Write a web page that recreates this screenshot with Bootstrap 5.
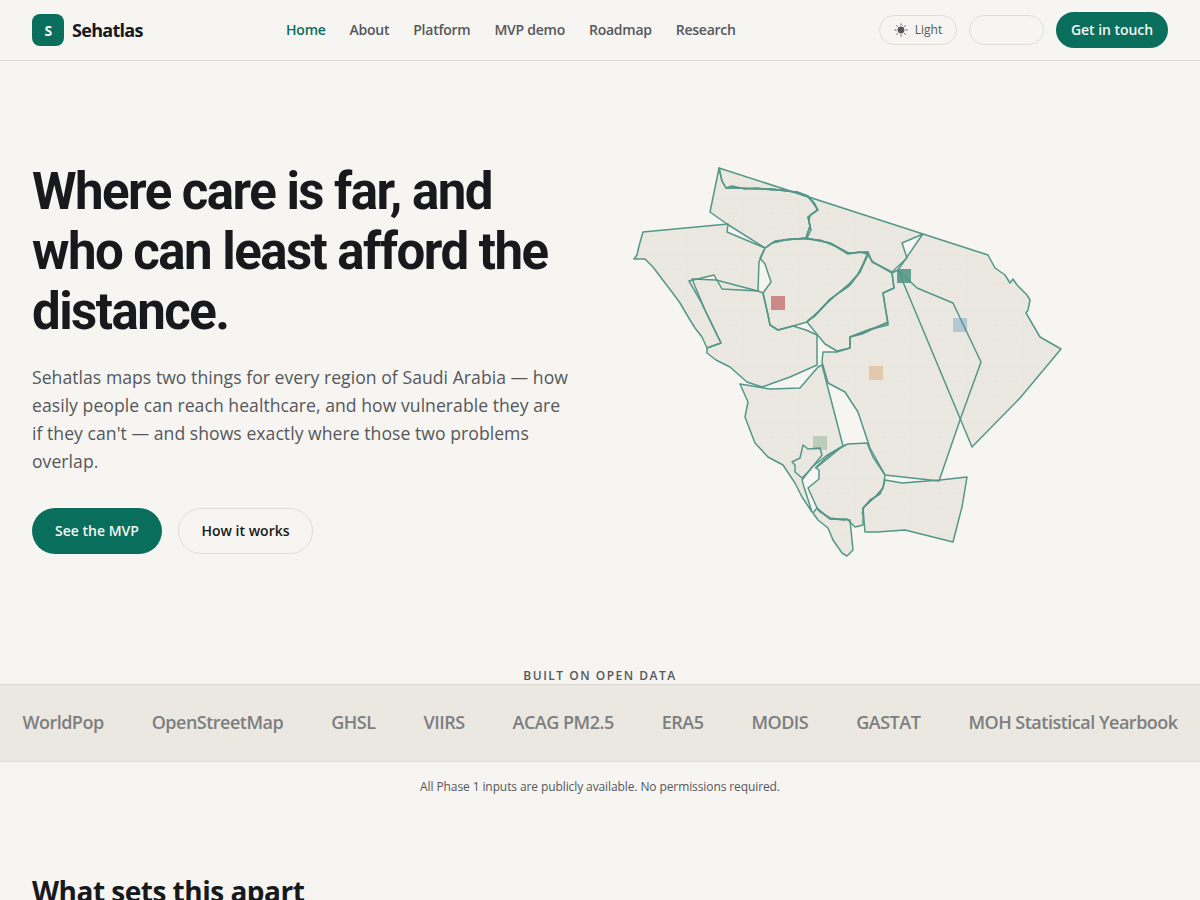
<!DOCTYPE html>
<html lang="en">
<head>
<meta charset="utf-8">
<title>Sehatlas</title>
<link href="https://cdn.jsdelivr.net/npm/bootstrap@5.3.0/dist/css/bootstrap.min.css" rel="stylesheet">
<style>
body{background:#f6f5f1;color:#17191c;font-family:"Open Sans","Noto Sans",sans-serif;overflow:hidden;height:900px}
.topbar{height:61px;padding:0 32px;border-bottom:1px solid #dcdad4;background:#f6f5f1}
.brand-mark{width:32px;height:32px;border-radius:8px;background:#0a6e5c;color:#f6f5f1;font-size:14px;font-weight:700}
.brand-name{font-size:18px;font-weight:700;color:#17191c;letter-spacing:-.7px;margin:0;padding:0}
.top-links{gap:24px;padding-bottom:2px}
.top-links .nav-link{padding:0;font-size:14px;font-weight:600;color:#55575b;letter-spacing:-.25px}
.top-links .nav-link.active{color:#0a6e5c}
.top-actions{gap:12px}
.chip{height:30px;border:1px solid #dfddd7;border-radius:15px;font-size:12px;font-weight:500;color:#55575b;padding:0;width:78px;gap:7px;background:transparent}
.chip-blank{width:75px}
.cta{height:36px;width:112px;border-radius:18px;background:#0a6e5c;color:#f6f5f1;font-size:14px;font-weight:600;padding:0 0 1px;border:0;letter-spacing:-.05px}
.hero{padding:100px 32px 110px}
.hero h1{font-family:Roboto,"Open Sans",sans-serif;font-size:51px;line-height:60px;font-weight:700;letter-spacing:-1.55px;margin:0 0 21px;padding-top:1px}
.hero-copy{font-size:17.6px;line-height:28px;color:#55575b;margin:0 0 33px;letter-spacing:.04px;max-width:540px}
.btn-main,.btn-ghost{height:46px;border-radius:23px;font-size:14px;font-weight:600;padding:0 0 1px}
.btn-main{width:130px;background:#0a6e5c;color:#f6f5f1;border:0}
.btn-ghost{width:135px;border:1px solid #dfddd7;color:#17191c;background:transparent}
.map-art{display:block;width:544px;height:397px;overflow:visible}
.map-fill{fill:url(#cells);stroke:none}
.map-line{fill:none;stroke:#549789;stroke-width:1.5;stroke-linejoin:round}
.band-title{font-size:12px;font-weight:600;letter-spacing:1.5px;color:#55575b;line-height:16px;text-align:center;margin:0}
.source-band{background:#ebe8e1;border-top:1px solid #dcdad4;border-bottom:1px solid #dcdad4;height:78px;gap:48px;white-space:nowrap;padding-bottom:2px}
.source-band span{font-size:18px;font-weight:600;color:#7d7e7f;letter-spacing:-.5px}
.band-note{font-size:12px;color:#55575b;text-align:center;margin:17px 0 0;line-height:16px;letter-spacing:-.1px}
.sets-title{font-size:28px;font-weight:700;letter-spacing:-.5px;margin:78px 0 0 32px;line-height:36px}
</style>
</head>
<body>
<nav class="topbar d-flex align-items-center justify-content-between">
  <a class="navbar-brand brand-name d-flex align-items-center gap-2" href="#"><span class="brand-mark d-flex align-items-center justify-content-center">S</span>Sehatlas</a>
  <ul class="nav top-links">
    <li class="nav-item"><a class="nav-link active" href="#">Home</a></li>
    <li class="nav-item"><a class="nav-link" href="#">About</a></li>
    <li class="nav-item"><a class="nav-link" href="#">Platform</a></li>
    <li class="nav-item"><a class="nav-link" href="#">MVP demo</a></li>
    <li class="nav-item"><a class="nav-link" href="#">Roadmap</a></li>
    <li class="nav-item"><a class="nav-link" href="#">Research</a></li>
  </ul>
  <div class="d-flex align-items-center top-actions">
    <button class="btn chip d-flex align-items-center justify-content-center" type="button">
      <svg width="14" height="14" viewBox="0 0 14 14" aria-hidden="true"><circle cx="7" cy="7" r="3.4" fill="#55575b"/><g stroke="#55575b" stroke-width="1" stroke-linecap="round"><path d="M7 .8v1.3M7 11.9v1.3M.8 7h1.3M11.9 7h1.3M2.6 2.6l.9.9M10.5 10.5l.9.9M2.6 11.4l.9-.9M10.5 3.5l.9-.9"/></g></svg>
      Light
    </button>
    <button class="btn chip chip-blank" type="button" aria-label="Language"></button>
    <a class="btn cta d-flex align-items-center justify-content-center" href="#">Get in touch</a>
  </div>
</nav>

<section class="hero">
  <div class="row gx-5 align-items-start">
    <div class="col-6">
      <h1>Where care is far, and who can least afford the distance.</h1>
      <p class="hero-copy">Sehatlas maps two things for every region of Saudi Arabia — how easily people can reach healthcare, and how vulnerable they are if they can't — and shows exactly where those two problems overlap.</p>
      <div class="d-flex gap-3">
        <a class="btn btn-main d-flex align-items-center justify-content-center" href="#">See the MVP</a>
        <a class="btn btn-ghost d-flex align-items-center justify-content-center" href="#">How it works</a>
      </div>
    </div>
    <div class="col-6">
      <svg class="map-art" viewBox="624 161 544 397" role="img" aria-label="Map of Saudi Arabia regions">
        <defs>
          <pattern id="cells" x="1" y="3" width="14" height="14" patternUnits="userSpaceOnUse">
            <rect width="14" height="14" fill="#ebe8e1"/>
            <path d="M0 0H14M0 0V14" stroke="#e5e2da" stroke-width=".7" fill="none"/>
          </pattern>
          <g id="regions">
            <path d="M719 168L717 178L710 212L727 224L765 248L772 243L785 240L806 238L810 226L808 217L812 214L818 210L814 203L808 196L797 192L785 191L772 189L755 189L737 188L726 188L722 181Z"/>
            <path d="M719 168L923 234L902 243L907 258L892 272L872 262L868 252L848 253L830 243L806 238L810 226L808 217L818 210L808 196L797 192L772 189L737 188L726 188L722 181Z"/>
            <path d="M728 224L643 232L639 246L637 255L634 259L645 259L653 267L662 279L672 292L680 303L687 315L695 328L702 337L707 348L721 343L700 300L689 281L714 275L722 289L758 291L759 262L765 248L727 232Z"/>
            <path d="M692 279L716 280L758 291L763 293L768 315L770 325L778 330L793 326L806 330L817 335L817 365L790 377L762 387L747 382L730 367L716 360L707 353L707 348L721 343L705 310Z"/>
            <path d="M765 248L760 258L765 264L771 282L763 293L768 315L770 325L778 330L793 326L807 322L818 312L830 299L850 285L860 272L868 252L848 253L830 243L806 238L785 240L772 243Z"/>
            <path d="M868 255L873 262L892 273L894 288L883 293L888 323L868 330L850 337L850 348L837 351L825 344L807 322L818 312L830 300L850 283L860 272Z"/>
            <path d="M898 270L917 288L953 303L981 362L960 420L939 481L885 475L870 448L858 412L845 392L828 383L822 362L823 352L837 352L850 348L850 337L868 330L888 325L883 293L894 288L892 273Z"/>
            <path d="M923 234L988 255L995 268L1005 275L1010 283L1013 279L1017 285L1027 295L1030 300L1028 310L1026 313L1040 337L1061 349L1020 398L972 447L898 270L920 238Z"/>
            <path d="M740 384L770 389L800 388L818 367L822 365L843 446L826 456L812 467L802 480L804 487L812 512L802 497L795 483L783 465L768 457L755 443L750 430L745 417L748 402Z"/>
            <path d="M803 445L808 449L820 448L822 455L810 470L802 478L795 472L795 465L792 462L800 458Z"/>
            <path d="M843 446L848 444L867 443L873 457L885 475L883 488L877 495L863 508L863 525L855 527L847 519L830 519L818 510L808 488L819 479L819 470L816 468L832 455Z"/>
            <path d="M817 508L813 513L818 520L828 528L833 540L842 553L847 556L853 550L850 520L830 519Z"/>
            <path d="M885 480L902 483L940 480L967 477L962 507L953 542L905 530L877 532L865 532L863 508L877 495L883 488Z"/>
          </g>
        </defs>
        <use href="#regions" class="map-fill"/>
        <rect x="771" y="296" width="14" height="14" fill="#cb8a85"/>
        <rect x="897" y="269" width="14" height="14" fill="#0a6e5c" opacity=".6"/>
        <rect x="953" y="318" width="14" height="14" fill="#8fb0cf" opacity=".6"/>
        <rect x="869" y="366" width="14" height="14" fill="#e3c9ab"/>
        <rect x="813" y="436" width="14" height="14" fill="#bccdb9"/>
        <use href="#regions" class="map-line"/>
        <path class="map-line" d="M726 188L732 186L745 189L757 188L772 190L785 190L797 193L808 197L815 204L817 210L810 215L809 222L811 230L807 238"/>
        <path class="map-line" d="M767 247L775 241L790 239L805 239L820 240L835 246L848 254L860 252L867 254"/>
        <path class="map-line" d="M807 321L815 316L826 304L836 295L848 287L858 274L866 258"/>
        <path class="map-line" d="M883 487L880 494L870 500L864 507L862 514"/>
        <path class="map-line" d="M819 511L830 518L845 520"/>
        <path class="map-line" d="M850 337L862 334L875 328L888 322"/>
        <path class="map-line" d="M815 468L826 458L838 449L846 445"/>
      </svg>
    </div>
  </div>
</section>

<p class="band-title">BUILT ON OPEN DATA</p>
<div class="source-band d-flex align-items-center justify-content-center">
  <span>WorldPop</span><span>OpenStreetMap</span><span>GHSL</span><span>VIIRS</span><span>ACAG PM2.5</span><span>ERA5</span><span>MODIS</span><span>GASTAT</span><span>MOH Statistical Yearbook</span>
</div>
<p class="band-note">All Phase 1 inputs are publicly available. No permissions required.</p>
<h2 class="sets-title">What sets this apart</h2>
<script src="https://cdn.jsdelivr.net/npm/bootstrap@5.3.0/dist/js/bootstrap.bundle.min.js"></script>
</body>
</html>
